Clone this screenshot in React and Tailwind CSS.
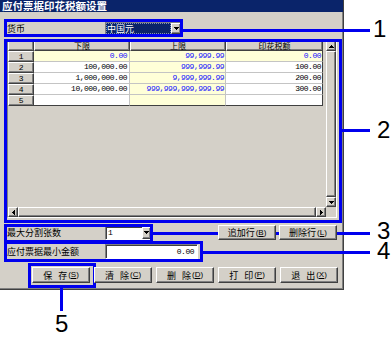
import React from 'react';

const raised =
  'border border-t-white border-l-white border-r-[#404040] border-b-[#404040] shadow-[inset_-1px_-1px_0_#808080]';
const sunken =
  'border border-t-[#808080] border-l-[#808080] border-r-white border-b-white shadow-[inset_1px_1px_0_#404040]';

const rows = [
  { n: 1, lo: '0.00', hi: '99,999.99', tax: '0.00', first: true },
  { n: 2, lo: '100,000.00', hi: '999,999.99', tax: '100.00' },
  { n: 3, lo: '1,000,000.00', hi: '9,999,999.99', tax: '200.00' },
  { n: 4, lo: '10,000,000.00', hi: '999,999,999,999.99', tax: '300.00' },
  { n: 5, lo: '', hi: '', tax: '' },
];

function Tri({ dir }) {
  const pts = {
    down: '0,0 5,0 2.5,3',
    up: '0,3 5,3 2.5,0',
    left: '3,0 3,5 0,2.5',
    right: '0,0 0,5 3,2.5',
  }[dir];
  const vert = dir === 'up' || dir === 'down';
  return (
    <svg width={vert ? 5 : 3} height={vert ? 3 : 5} viewBox={vert ? '0 0 5 3' : '0 0 3 5'} shapeRendering="crispEdges">
      <polygon points={pts} fill="#000" />
    </svg>
  );
}

function ArrowBtn({ dir, className }) {
  return (
    <div className={`${raised} bg-[#d4d0c8] flex items-center justify-center shrink-0 ${className}`}>
      <Tri dir={dir} />
    </div>
  );
}

function Btn({ a, b, k, gap }) {
  return (
    <div className={`${raised} bg-[#d4d0c8] w-[58px] h-full flex items-center justify-center text-[9px] leading-none text-black relative z-10`}>
      <span>{a}</span>
      {gap ? <span className="ml-[6px]">{b}</span> : <span>{b}</span>}
      <span className="font-['Liberation_Sans',sans-serif] text-[8px] ml-[1px]">
        (<span className="underline">{k}</span>)
      </span>
    </div>
  );
}

function Grid() {
  return (
    <div className="ml-[7px] mt-[5px] w-[330px] h-[178px] border border-t-[#808080] border-l-[#808080] border-r-white border-b-white flex flex-col">
      <div className="flex flex-1 min-h-0">
        <div className="flex-1 bg-[#d4d0c8] overflow-hidden">
          <div className="flex h-[10px]">
            <div className={`${raised} w-[26px] bg-[#d4d0c8]`} />
            {[['下限', 'w-[96px]'], ['上限', 'w-[96px]'], ['印花税额', 'w-[97px]']].map(([t, w]) => (
              <div key={t} className={`${raised} ${w} bg-[#d4d0c8] flex items-center justify-center text-[8px] leading-[8px] text-black`}>
                {t}
              </div>
            ))}
          </div>
          {rows.map((r) => (
            <div key={r.n} className="flex h-[11px] font-['Liberation_Mono',monospace] text-[8px] tracking-[-0.5px] leading-none">
              <div className={`${raised} w-[26px] bg-[#d4d0c8] flex items-center justify-center text-black`}>{r.n}</div>
              <div
                className={`w-[96px] flex items-center justify-end pr-[2px] border-r border-b border-[#c4c4c4] ${
                  r.first ? 'bg-[#ffffd8] text-[#1818ff]' : 'bg-white text-black'
                } ${r.n === 5 ? 'border-b-[#404040]' : ''}`}
              >
                {r.lo}
              </div>
              <div
                className={`w-[96px] flex items-center justify-end pr-[1px] border-r border-b border-[#c4c4c4] bg-[#ffffd8] text-[#1818ff] ${
                  r.n === 5 ? 'border-b-[#404040]' : ''
                }`}
              >
                {r.hi}
              </div>
              <div
                className={`w-[97px] flex items-center justify-end pr-[1px] border-r border-b border-[#c4c4c4] border-r-[#404040] ${
                  r.first ? 'bg-[#ffffd8] text-[#1818ff]' : 'bg-white text-black'
                } ${r.n === 5 ? 'border-b-[#404040]' : ''}`}
              >
                {r.tax}
              </div>
            </div>
          ))}
        </div>
        <div className="w-[10px] flex flex-col">
          <ArrowBtn dir="up" className="h-[10px]" />
          <div className={`${raised} flex-1 bg-[#d4d0c8]`} />
          <ArrowBtn dir="down" className="h-[10px]" />
        </div>
      </div>
      <div className="flex h-[10px]">
        <ArrowBtn dir="left" className="w-[10px]" />
        <div className={`${raised} flex-1 bg-[#d4d0c8]`} />
        <ArrowBtn dir="right" className="w-[10px]" />
        <div className="w-[10px] bg-[#d4d0c8]" />
      </div>
    </div>
  );
}

export default function App() {
  return (
    <div className="relative w-[391px] h-[339px] bg-white overflow-hidden font-['Noto_Sans_CJK_SC','Noto_Sans',sans-serif]">
      <div className="w-[344px] h-[290px] bg-[#d4d0c8] border-r border-b border-r-[#404040] border-b-[#404040] shadow-[inset_-1px_-1px_0_#808080] flex flex-col">
        <div className="h-[12px] bg-[#0a246a] text-white text-[10.5px] leading-[12px] font-bold pl-[2px] whitespace-nowrap flex items-center">
          应付票据印花税额设置
        </div>

        <div className="mt-[10px] h-[13px] flex items-center">
          <div className="w-[105px] pl-[7px] text-[9px] leading-none text-black">货币</div>
          <div className={`${sunken} w-[77px] h-[13px] flex bg-white`}>
            <div className="flex-1 bg-[#0a246a] text-white text-[9px] leading-[11px] pl-[1px] outline-1 outline-dotted outline-[#ffffff80] -outline-offset-1">
              中国元
            </div>
            <ArrowBtn dir="down" className="w-[10px]" />
          </div>
        </div>

        <Grid />

        <div className="mt-[7px] h-[15px] flex items-center pr-[6px]">
          <div className="w-[105px] pl-[7px] text-[9px] leading-none text-black">最大分割张数</div>
          <div className={`${sunken} w-[47px] h-[14px] flex bg-white`}>
            <div className="flex-1 text-[8px] leading-[12px] pl-[2px] font-['Liberation_Mono',monospace]">1</div>
            <ArrowBtn dir="down" className="w-[9px]" />
          </div>
          <div className="ml-auto flex gap-[3px] h-[15px]">
            <Btn a="追加" b="行" k="B" />
            <Btn a="删除" b="行" k="L" />
          </div>
        </div>

        <div className="mt-[4px] h-[15px] flex items-center">
          <div className="w-[105px] pl-[7px] text-[9px] leading-none text-black whitespace-nowrap">应付票据最小金额</div>
          <div className={`${sunken} w-[93px] h-[15px] bg-white flex items-center justify-end pr-[3px] font-['Liberation_Mono',monospace] text-[8px] tracking-[-0.5px]`}>
            0.00
          </div>
        </div>

        <div className="mt-[8px] h-[16px] flex pl-[32px] gap-[4px]">
          <Btn a="保" b="存" k="S" gap />
          <Btn a="清" b="除" k="C" gap />
          <Btn a="删" b="除" k="D" gap />
          <Btn a="打" b="印" k="P" gap />
          <Btn a="退" b="出" k="X" gap />
        </div>
      </div>

      {/* callouts */}
      <div className="absolute left-[4px] top-[19px] w-[179px] h-[18px] border-[3px] border-[#0000ee]" />
      <div className="absolute left-[183px] top-[29px] w-[187px] h-[3px] bg-[#0000ee]" />
      <div className="absolute left-[373px] top-[17px] text-[24px] leading-none font-['Liberation_Sans',sans-serif] text-black">1</div>

      <div className="absolute left-[4px] top-[39px] w-[338px] h-[184px] border-[3px] border-[#0000ee]" />
      <div className="absolute left-[342px] top-[129px] w-[28px] h-[3px] bg-[#0000ee]" />
      <div className="absolute left-[377px] top-[118px] text-[24px] leading-none font-['Liberation_Sans',sans-serif] text-black">2</div>

      <div className="absolute left-[4px] top-[224px] w-[149px] h-[19px] border-[3px] border-[#0000ee]" />
      <div className="absolute left-[153px] top-[232px] w-[217px] h-[3px] bg-[#0000ee]" />
      <div className="absolute left-[377px] top-[221px] text-[24px] leading-[20px] font-['Liberation_Sans',sans-serif] text-black">3</div>

      <div className="absolute left-[4px] top-[241px] w-[199px] h-[21px] border-[3px] border-[#0000ee]" />
      <div className="absolute left-[203px] top-[251px] w-[167px] h-[3px] bg-[#0000ee]" />
      <div className="absolute left-[377px] top-[241px] text-[24px] leading-[20px] font-['Liberation_Sans',sans-serif] text-black">4</div>

      <div className="absolute left-[28px] top-[263px] w-[68px] h-[25px] border-[3px] border-[#0000ee]" />
      <div className="absolute left-[60px] top-[288px] w-[3px] h-[23px] bg-[#0000ee]" />
      <div className="absolute left-[55px] top-[312px] text-[24px] leading-none font-['Liberation_Sans',sans-serif] text-black">5</div>
    </div>
  );
}
